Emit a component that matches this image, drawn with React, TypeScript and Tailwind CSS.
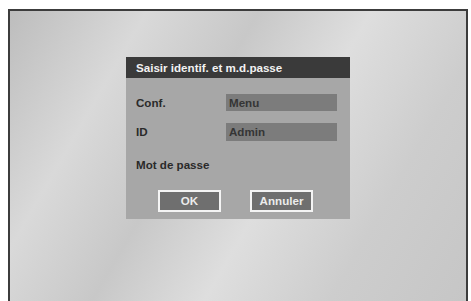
export default function App() {
  return (
    <div className="w-[471px] h-[301px] bg-white pl-[8px] pt-[9px] overflow-hidden font-['Liberation_Sans',Arial,sans-serif]">
      <div className="w-[460px] h-[292px] border-2 border-b-0 border-[#3c3c3c] bg-[linear-gradient(120deg,#bdbdbd_0%,#d9d9d9_22%,#c8c8c8_40%,#dedede_58%,#cdcdcd_78%,#c6c6c6_100%)] pt-[46px]">
        <div className="mx-auto w-[224px] bg-[#a7a7a7]">
          <div className="h-[21px] bg-[#3a3a3a] pl-[10px] flex items-center text-[11.6px] font-bold text-[#f2f2f2]">
            Saisir identif. et m.d.passe
          </div>
          <div className="pt-[16px] pb-[7px]">
            <div className="flex items-center h-[17px]">
              <span className="w-[100px] pl-[10px] text-[11.6px] font-bold text-[#2a2a2a]">Conf.</span>
              <div className="w-[111px] h-[17px] bg-[#7c7c7c] pl-[3px] flex items-center text-[11.6px] font-bold text-[#353535]">Menu</div>
            </div>
            <div className="flex items-center h-[18px] mt-[12px]">
              <span className="w-[100px] pl-[10px] text-[11.6px] font-bold text-[#2a2a2a]">ID</span>
              <div className="w-[111px] h-[18px] bg-[#7c7c7c] pl-[3px] flex items-center text-[11.6px] font-bold text-[#353535]">Admin</div>
            </div>
            <div className="flex items-center h-[17px] mt-[15px]">
              <span className="pl-[10px] text-[11.6px] font-bold text-[#2a2a2a]">Mot de passe</span>
            </div>
            <div className="flex gap-[29px] pl-[32px] mt-[17px]">
              <button className="w-[63px] h-[22px] border-2 border-[#f4f4f4] bg-[#6f6f6f] text-[11.6px] font-bold text-[#ececec] flex items-center justify-center">OK</button>
              <button className="w-[63px] h-[22px] border-2 border-[#f4f4f4] bg-[#6f6f6f] text-[11.6px] font-bold text-[#ececec] flex items-center justify-center">Annuler</button>
            </div>
          </div>
        </div>
      </div>
    </div>
  )
}
